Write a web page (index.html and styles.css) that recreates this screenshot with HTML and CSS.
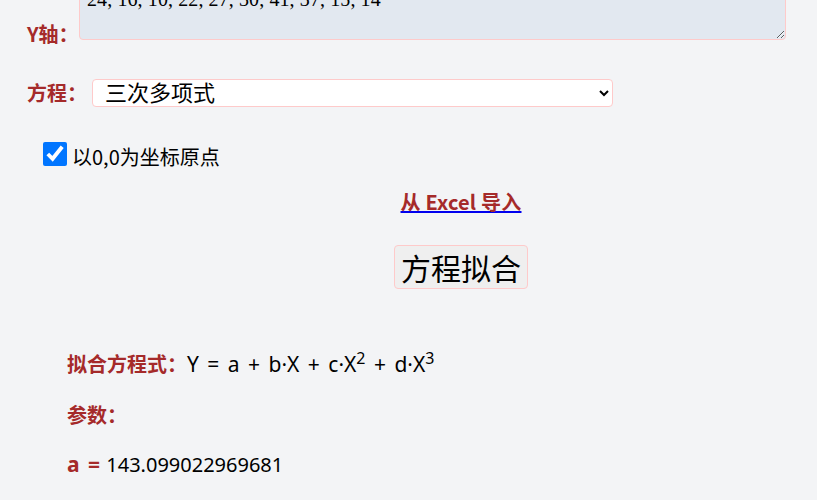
FILE: index.html
```html
<!DOCTYPE html>
<html lang="zh">
<head>
<meta charset="utf-8">
<link rel="stylesheet" href="styles.css">
</head>
<body>
<div class="page">
  <div class="field field-y">
    <label class="lbl lbl-y">Y轴：</label>
    <textarea class="data">24, 16, 10, 22, 27, 30, 41, 37, 15, 14</textarea>
  </div>
  <div class="field field-eq">
    <label class="lbl lbl-eq">方程：</label>
    <select class="eq-select">
      <option>三次多项式</option>
    </select>
  </div>
  <div class="check-row">
    <input type="checkbox" class="chk" checked>
    <span class="chk-text">以0,0为坐标原点</span>
  </div>
  <div class="center-row link-row">
    <a class="import" href="#"><span class="import-text">从 Excel 导入</span></a>
  </div>
  <div class="center-row btn-row">
    <button class="fit-btn">方程拟合</button>
  </div>
  <div class="results">
    <p class="res"><span class="res-lbl">拟合方程式：</span><span class="val">Y = a + b·X + c·X<sup>2</sup> + d·X<sup>3</sup></span></p>
    <p class="res"><span class="res-lbl">参数：</span></p>
    <p class="res"><span class="res-lbl res-var">a =</span> <span class="num">143.099022969681</span></p>
  </div>
</div>
</body>
</html>
```

FILE: styles.css
```css
html, body {
  margin: 0;
  padding: 0;
  background: #f3f4f6;
}
body {
  font-family: "Noto Sans", "Noto Sans CJK SC", sans-serif;
  font-size: 20px;
  color: #000;
  overflow: hidden;
}
.page {
  width: 817px;
}
.field {
  display: flex;
  padding-left: 27px;
}
.field-y {
  align-items: flex-end;
  margin-top: -19px;
}
.lbl {
  font-weight: bold;
  color: #a52a2a;
  font-size: 20px;
  line-height: 24px;
  font-family: "Noto Sans CJK SC", sans-serif;
}
.lbl-y {
  width: 52px;
  margin-bottom: -6px;
}
.data {
  box-sizing: border-box;
  width: 707px;
  height: 59px;
  padding: 6px 7px;
  border: 1px solid #fecaca;
  border-radius: 4px;
  background: #e2e8f0;
  font-family: "Liberation Serif", serif;
  font-size: 20px;
  line-height: 23px;
  letter-spacing: 0.1px;
  color: #000;
  resize: vertical;
  margin: 0;
}
.field-eq {
  align-items: center;
  margin-top: 39px;
}
.lbl-eq {
  width: 65px;
}
.eq-select {
  box-sizing: border-box;
  width: 521px;
  height: 28px;
  border: 1px solid #fecaca;
  border-radius: 4px;
  background: #fff;
  font-family: "Liberation Sans", "Noto Sans CJK SC", sans-serif;
  font-size: 22px;
  padding: 0 8px;
  color: #000;
  margin: 0;
}
.check-row {
  display: flex;
  align-items: flex-end;
  padding-left: 43px;
  margin-top: 35px;
}
.chk {
  width: 24px;
  height: 24px;
  margin: 0 5px 0 0;
}
.chk-text {
  font-family: "Noto Sans CJK SC", sans-serif;
  font-size: 20px;
  line-height: 24px;
  margin-bottom: -3px;
}
.center-row {
  text-align: center;
  padding-left: 105px;
}
.link-row {
  margin-top: 22px;
  line-height: 28px;
}
.import {
  color: #0000ee;
  text-decoration: underline;
  font-weight: bold;
  font-size: 20px;
  font-family: "Noto Sans CJK SC", sans-serif;
  letter-spacing: 0.2px;
}
.import-text {
  color: #a52a2a;
}
.btn-row {
  margin-top: 28px;
}
.fit-btn {
  font-family: "Noto Sans CJK SC", sans-serif;
  font-size: 30px;
  line-height: 40px;
  padding: 1px 6px;
  background: #efefef;
  border: 1px solid #fecaca;
  border-radius: 4px;
  color: #000;
  margin: 0;
}
.results {
  padding-left: 67px;
  margin-top: 60px;
}
.res {
  margin: 0 0 20px 0;
  line-height: 30px;
  font-size: 20px;
}
.res:nth-child(2) {
  margin-bottom: 18px;
}
.res-lbl {
  font-weight: bold;
  color: #a52a2a;
  font-family: "Noto Sans CJK SC", sans-serif;
}
.res-var {
  font-family: "Noto Sans", sans-serif;
  font-size: 21px;
  word-spacing: 3px;
}
.val {
  font-size: 21px;
  word-spacing: 3px;
}
.num {
  font-size: 20px;
  margin-left: 1px;
}
sup {
  font-size: 16px;
  line-height: 0;
}
```
